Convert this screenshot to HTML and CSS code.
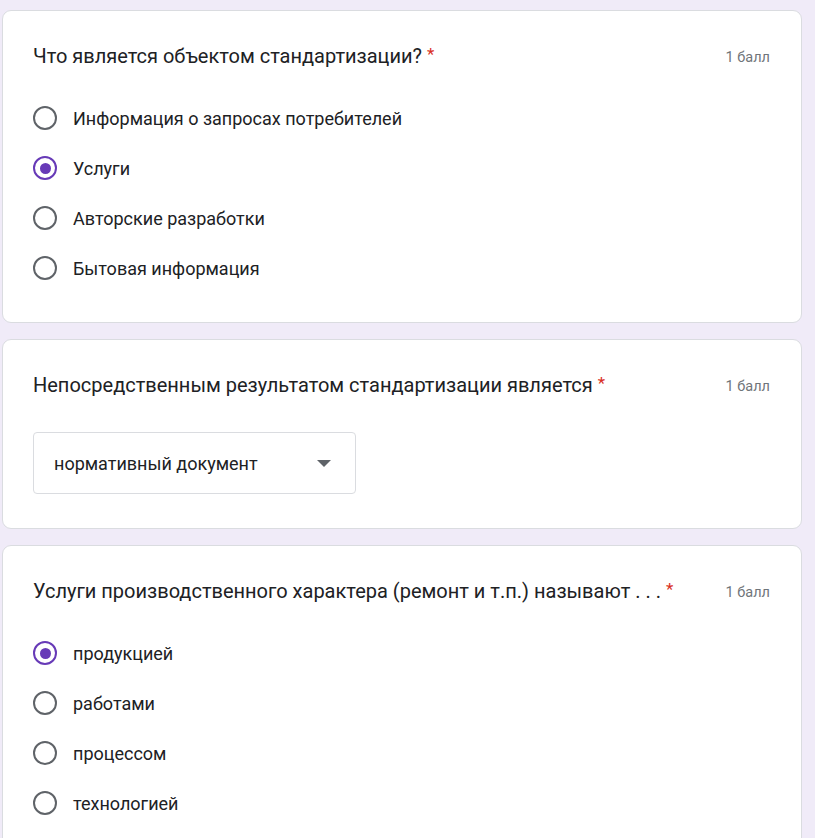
FILE: index.html
```html
<!DOCTYPE html>
<html lang="ru">
<head>
<meta charset="utf-8">
<link rel="stylesheet" href="styles.css">
</head>
<body>
<div class="page">
  <section class="card card-1">
    <div class="q-head">
      <div class="q-title">Что является объектом стандартизации? <span class="req">*</span></div>
      <div class="points">1 балл</div>
    </div>
    <div class="options">
      <label class="opt"><span class="radio"></span><span class="opt-text">Информация о запросах потребителей</span></label>
      <label class="opt"><span class="radio checked"></span><span class="opt-text">Услуги</span></label>
      <label class="opt"><span class="radio"></span><span class="opt-text">Авторские разработки</span></label>
      <label class="opt"><span class="radio"></span><span class="opt-text">Бытовая информация</span></label>
    </div>
  </section>
  <section class="card card-2">
    <div class="q-head">
      <div class="q-title">Непосредственным результатом стандартизации является <span class="req">*</span></div>
      <div class="points">1 балл</div>
    </div>
    <div class="select">
      <span class="select-text">нормативный документ</span>
      <svg class="arrow" width="14" height="7" viewBox="0 0 14 7"><path d="M0 0 L14 0 L7 7 Z" fill="#5f6368"/></svg>
    </div>
  </section>
  <section class="card card-3">
    <div class="q-head">
      <div class="q-title">Услуги производственного характера (ремонт и т.п.) называют . . . <span class="req">*</span></div>
      <div class="points">1 балл</div>
    </div>
    <div class="options">
      <label class="opt"><span class="radio checked"></span><span class="opt-text">продукцией</span></label>
      <label class="opt"><span class="radio"></span><span class="opt-text">работами</span></label>
      <label class="opt"><span class="radio"></span><span class="opt-text">процессом</span></label>
      <label class="opt"><span class="radio"></span><span class="opt-text">технологией</span></label>
    </div>
  </section>
</div>
</body>
</html>
```
FILE: styles.css
```css
* { box-sizing: border-box; }
html, body { margin: 0; padding: 0; }
body {
  background: #f0ebf8;
  font-family: Roboto, "Liberation Sans", Arial, sans-serif;
  color: #202124;
  overflow: hidden;
}
.page {
  padding: 10px 13px 0 2px;
  display: flex;
  flex-direction: column;
  gap: 16px;
}
.card {
  background: #fff;
  border: 1px solid #dadce0;
  border-radius: 9px;
  padding: 32px 31px 0 30px;
}
.card-1 { height: 313px; }
.card-2 { height: 190px; }
.card-3 { height: 320px; }
.q-head {
  display: flex;
  justify-content: space-between;
  align-items: center;
  height: 26px;
}
.q-title {
  font-size: 20px;
  color: #202124;
}
.req {
  color: #d93025;
  font-size: 17px;
  vertical-align: 3px;
}
.points {
  font-size: 14.5px;
  color: #70757a;
  padding-top: 3px;
}
.options {
  margin-top: 36px;
  display: flex;
  flex-direction: column;
  gap: 24px;
}
.opt {
  display: flex;
  align-items: center;
  height: 26px;
  gap: 16px;
}
.radio {
  width: 24px;
  height: 24px;
  border-radius: 50%;
  border: 2px solid #5f6368;
  flex: none;
  display: flex;
  align-items: center;
  justify-content: center;
}
.radio.checked { border-color: #673ab7; }
.radio.checked::after {
  content: "";
  width: 11px;
  height: 11px;
  border-radius: 50%;
  background: #673ab7;
}
.opt-text { font-size: 18px; }
.select {
  margin-top: 34px;
  width: 323px;
  height: 62px;
  border: 1px solid #dadce0;
  border-radius: 4px;
  display: flex;
  align-items: center;
  justify-content: space-between;
  padding: 0 24px 0 20px;
}
.select-text { font-size: 18px; }
```
